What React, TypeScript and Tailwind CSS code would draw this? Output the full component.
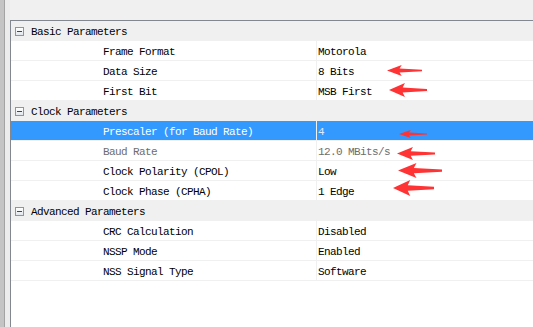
import React from "react";

type Row = { name: string; value: string; kind?: "sel" | "dis" };
type Group = { title: string; rows: Row[] };

const groups: Group[] = [
  {
    title: "Basic Parameters",
    rows: [
      { name: "Frame Format", value: "Motorola" },
      { name: "Data Size", value: "8 Bits" },
      { name: "First Bit", value: "MSB First" },
    ],
  },
  {
    title: "Clock Parameters",
    rows: [
      { name: "Prescaler (for Baud Rate)", value: "4", kind: "sel" },
      { name: "Baud Rate", value: "12.0 MBits/s", kind: "dis" },
      { name: "Clock Polarity (CPOL)", value: "Low" },
      { name: "Clock Phase (CPHA)", value: "1 Edge" },
    ],
  },
  {
    title: "Advanced Parameters",
    rows: [
      { name: "CRC Calculation", value: "Disabled" },
      { name: "NSSP Mode", value: "Enabled" },
      { name: "NSS Signal Type", value: "Software" },
    ],
  },
];

const arrows = [
  { x: 387, y: 65, w: 35, h: 11 },
  { x: 389, y: 83, w: 38, h: 14 },
  { x: 399, y: 130, w: 28, h: 8 },
  { x: 397, y: 147, w: 38, h: 13 },
  { x: 398, y: 163, w: 44, h: 15 },
  { x: 393, y: 180, w: 41, h: 16 },
];

function Minus() {
  return (
    <div className="ml-[4px] w-[9px] h-[9px] border border-[#8b95a3] bg-gradient-to-b from-[#ffffff] to-[#e2e6ec] flex items-center justify-center shrink-0">
      <div className="w-[5px] h-px bg-[#2f4a6e]" />
    </div>
  );
}

export default function App() {
  return (
    <div
      className="relative w-[533px] h-[327px] flex overflow-hidden bg-white text-[11px] tracking-[-0.6px] leading-none text-black"
      style={{ fontFamily: '"Liberation Mono", "DejaVu Sans Mono", monospace' }}
    >
      <div className="w-[4px] h-full bg-[#c4c4c4]" />
      <div className="w-px h-full bg-[#a3a3a3]" />
      <div className="w-[5px] h-full bg-[#ececec]" />
      <div className="flex-1 flex flex-col">
        <div className="h-[20px] bg-[#f0f0f0] shrink-0" />
        <div className="flex-1 border-t border-l border-[#828790] bg-white">
          {groups.map((g) => (
            <div key={g.title}>
              <div className="h-[20px] bg-[#f0f0f0] flex items-center">
                <Minus />
                <span className="ml-[7px] pt-[2px]">{g.title}</span>
              </div>
              {g.rows.map((r) => {
                const sel = r.kind === "sel";
                const dis = r.kind === "dis";
                return (
                  <div
                    key={r.name}
                    className={
                      "h-[20px] flex border-b border-[#f0f0f0] " +
                      (sel ? "bg-[#3399ff]" : "bg-white")
                    }
                  >
                    <div
                      className={
                        "w-[306px] shrink-0 pl-[92px] pt-[3px] flex items-center border-r border-[#f0f0f0] " +
                        (sel ? "text-white" : dis ? "text-[#6d6d6d]" : "text-black")
                      }
                    >
                      {r.name}
                    </div>
                    <div
                      className={
                        "flex-1 pl-[1px] pt-[3px] flex items-center " +
                        (sel ? "text-[#dfe9ff]" : dis ? "text-[#6d6d6d]" : "text-black")
                      }
                    >
                      {r.value}
                    </div>
                  </div>
                );
              })}
            </div>
          ))}
        </div>
      </div>
      {arrows.map((a, i) => (
        <svg
          key={i}
          className="absolute"
          style={{ left: a.x, top: a.y, width: a.w, height: a.h }}
          viewBox="0 0 100 40"
          preserveAspectRatio="none"
        >
          <path
            d="M0,20 L42,0 L36,13 L100,17 L100,23 L36,27 L42,40 Z"
            fill="#ff3333"
          />
        </svg>
      ))}
    </div>
  );
}
